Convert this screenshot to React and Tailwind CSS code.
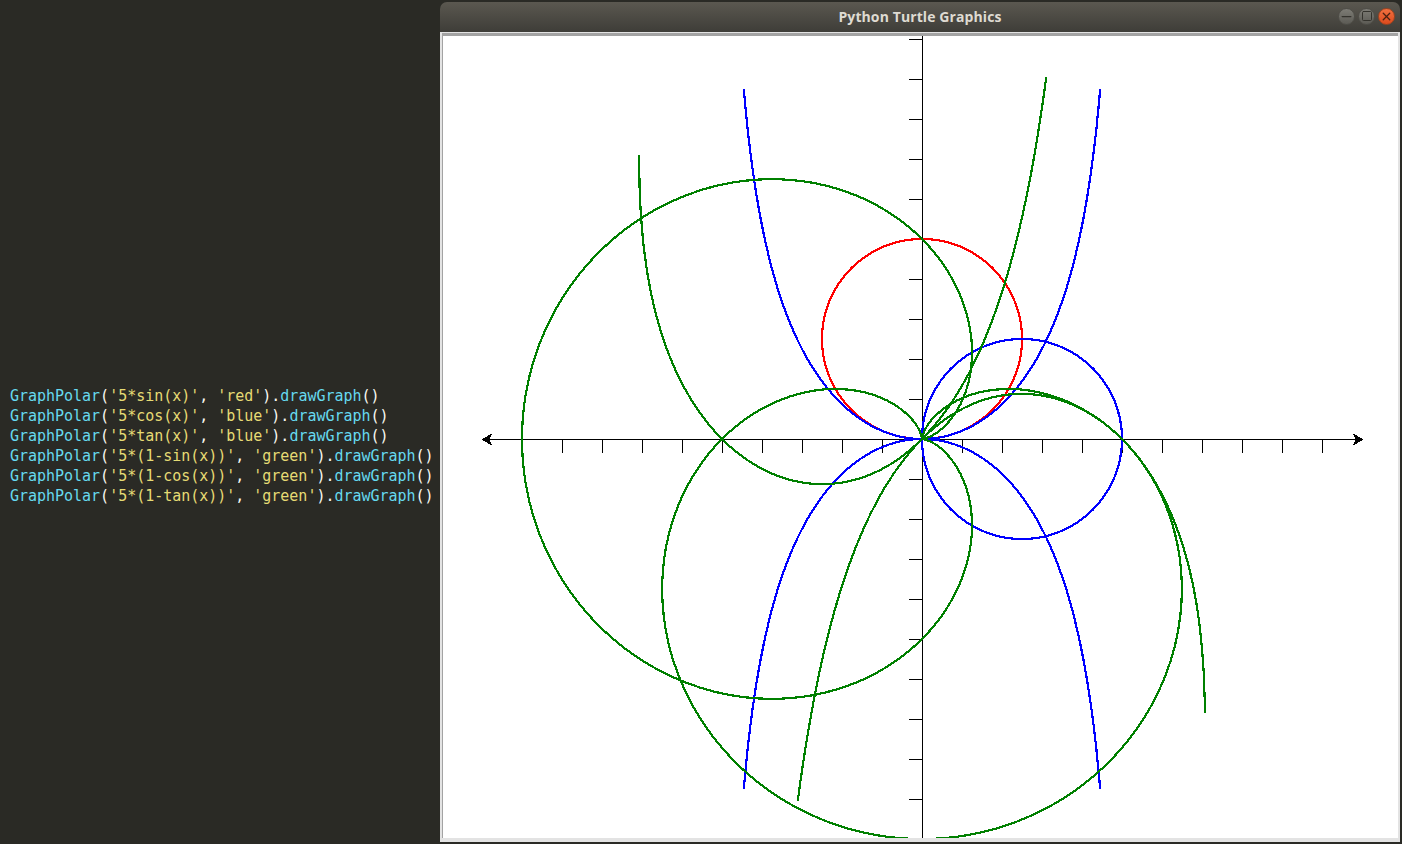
import React from 'react';
import { Minus, Square, X } from 'lucide-react';

const OX = 922;
const OY = 439;
const UNIT = 40;

// r is in graph units, theta in radians, same as the python script does it
const polar = (fn, from, to, step = 0.01) => {
    const pts = [];
    const n = Math.round((to - from) / step);
    for (let i = 0; i <= n; i++) {
        const t = from + ((to - from) * i) / n;
        const r = fn(t) * UNIT;
        pts.push(`${(OX + r * Math.cos(t)).toFixed(1)},${(OY - r * Math.sin(t)).toFixed(1)}`);
    }
    return pts.join(' ');
};

const PI = Math.PI;
const curves = [
    { color: '#ff0000', d: [polar((t) => 5 * Math.sin(t), 0, PI)] },
    { color: '#0000ff', d: [polar((t) => 5 * Math.cos(t), -PI / 2, PI / 2)] },
    {
        color: '#0000ff',
        d: [
            polar((t) => 5 * Math.tan(t), -1.1, 1.1),
            polar((t) => 5 * Math.tan(t), PI - 1.1, PI + 1.1),
        ],
    },
    { color: '#008000', d: [polar((t) => 5 * (1 - Math.sin(t)), 0, 2 * PI)] },
    { color: '#008000', d: [polar((t) => 5 * (1 - Math.cos(t)), 0, 2 * PI)] },
    {
        color: '#008000',
        d: [
            polar((t) => 5 * (1 - Math.tan(t)), -0.77, 1.24),
            polar((t) => 5 * (1 - Math.tan(t)), PI - 0.787, PI + 1.24),
        ],
    },
];

const xTicks = Array.from({ length: 20 }, (_, i) => 562 + i * 40).filter((x) => x !== 922);
const yTicks = Array.from({ length: 20 }, (_, i) => 39 + i * 40).filter((y) => y !== 439);

const Graph = () => (
    <svg width="955" height="802" viewBox="443 36 955 802" className="block">
        <g stroke="#000" strokeWidth="1" shapeRendering="crispEdges">
            <line x1="484" y1="439.5" x2="1360" y2="439.5" />
            <line x1="922.5" y1="36" x2="922.5" y2="838" />
            {xTicks.map((x) => (
                <line key={x} x1={x + 0.5} y1="439" x2={x + 0.5} y2="453" />
            ))}
            {yTicks.map((y) => (
                <line key={y} x1="909" y1={y + 0.5} x2="922" y2={y + 0.5} />
            ))}
        </g>
        <g fill="#000" stroke="#000" strokeWidth="1" shapeRendering="crispEdges">
            <polygon points="482.5,439.5 491,434.5 489,439.5 491,444.5" />
            <polygon points="1362.5,439.5 1354,434.5 1356,439.5 1354,444.5" />
        </g>
        {curves.map((c, i) =>
            c.d.map((pts, j) => (
                <polyline
                    key={`${i}-${j}`}
                    points={pts}
                    fill="none"
                    stroke={c.color}
                    strokeWidth="2.2"
                    shapeRendering="crispEdges"
                />
            ))
        )}
    </svg>
);

const lines = [
    ["'5*sin(x)'", "'red'"],
    ["'5*cos(x)'", "'blue'"],
    ["'5*tan(x)'", "'blue'"],
    ["'5*(1-sin(x))'", "'green'"],
    ["'5*(1-cos(x))'", "'green'"],
    ["'5*(1-tan(x))'", "'green'"],
];

const CodeLine = ({ expr, color }) => (
    <div className="h-5 whitespace-pre">
        <span className="text-[#66d9ef]">GraphPolar</span>
        <span className="text-[#f8f8f2]">(</span>
        <span className="text-[#e6db74]">{expr}</span>
        <span className="text-[#f8f8f2]">, </span>
        <span className="text-[#e6db74]">{color}</span>
        <span className="text-[#f8f8f2]">).</span>
        <span className="text-[#66d9ef]">drawGraph</span>
        <span className="text-[#f8f8f2]">()</span>
    </div>
);

const App = () => {
    return (
        <div className="flex h-[844px] w-[1402px] overflow-hidden bg-[#2a2a25]">
            <div className="w-[440px] shrink-0 pl-[10px] pt-[386px] font-['DejaVu_Sans_Mono',monospace] text-[15px] leading-5 tracking-[-0.02px]">
                {lines.map(([expr, color]) => (
                    <CodeLine key={expr} expr={expr} color={color} />
                ))}
            </div>

            <div className="mt-[2px] flex h-[840px] w-[960px] shrink-0 flex-col overflow-hidden rounded-t-[7px]">
                <div className="grid h-[30px] shrink-0 grid-cols-[1fr_auto_1fr] items-center bg-gradient-to-b from-[#5b5850] to-[#3e3d38] px-[5px]">
                    <div />
                    <div className="mb-[1px] font-['Open_Sans',sans-serif] text-[14px] font-bold tracking-[0.1px] text-[#dfdbd2]">Python Turtle Graphics</div>
                    <div className="mb-[2px] flex justify-end gap-[3px]">
                        <div className="flex h-[17px] w-[17px] items-center justify-center rounded-full border border-[#4f4e48] bg-gradient-to-b from-[#7d7c75] to-[#5c5b55] text-[#34332d]">
                            <Minus size={15} strokeWidth={2} />
                        </div>
                        <div className="flex h-[17px] w-[17px] items-center justify-center rounded-full border border-[#4f4e48] bg-gradient-to-b from-[#7d7c75] to-[#5c5b55] text-[#34332d]">
                            <Square size={12} strokeWidth={2} />
                        </div>
                        <div className="flex h-[17px] w-[17px] items-center justify-center rounded-full border border-[#a0431f] bg-gradient-to-b from-[#f2703f] to-[#dc4a1c] text-[#4a2010]">
                            <X size={13} strokeWidth={2.4} />
                        </div>
                    </div>
                </div>
                <div className="flex-1 bg-[#e3e3e3] pb-1 pl-[2px] pr-[2px] pt-[1px]">
                    <div className="border-l border-t-[3px] border-[#a3a3a3] bg-white">
                        <Graph />
                    </div>
                </div>
            </div>
        </div>
    );
};

export default App;
